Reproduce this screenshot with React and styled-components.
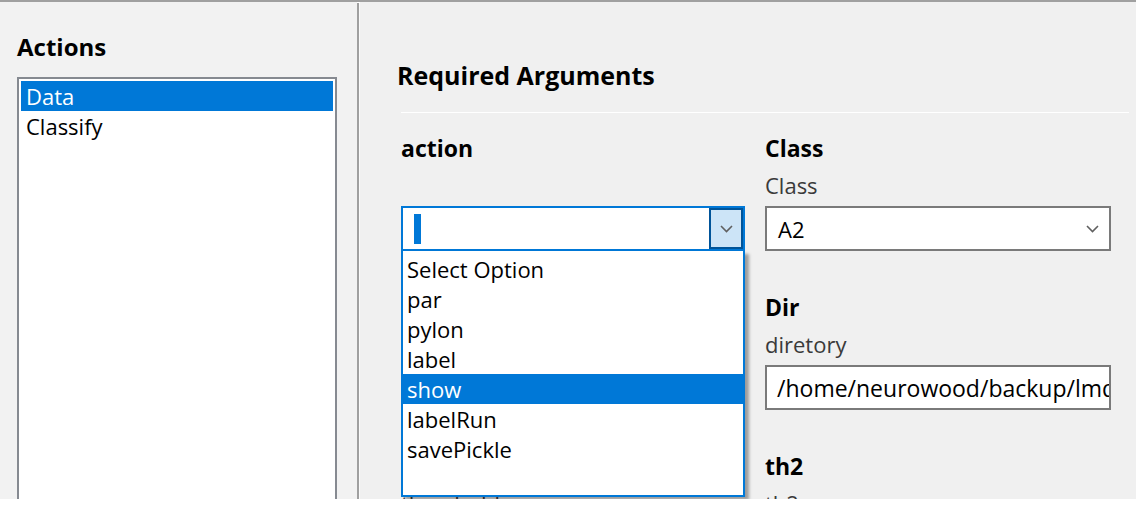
import React from 'react';
import styled, {createGlobalStyle} from 'styled-components';

const GlobalStyle = createGlobalStyle`
html, body {
    margin: 0;
    padding: 0;
    background: white;
}

body {
    font-family: 'Open Sans', 'Noto Sans', sans-serif;
    color: #000;
}
`

const Window = styled.div`
width: 1136px;
height: 499px;
display: flex;
border-top: 2px solid #a0a0a0;
box-sizing: border-box;
overflow: hidden;
`

const LeftPane = styled.div`
width: 357px;
flex-shrink: 0;
padding: 29px 0 0 17px;
box-sizing: border-box;
background: #f2f2f2;
display: flex;
flex-direction: column;
`

const PaneTitle = styled.h2`
margin: 0 0 14px;
font-size: 24px;
line-height: 32px;
font-weight: 700;
`

const ListBox = styled.ul`
width: 320px;
height: 460px;
flex-shrink: 0;
margin: 0;
padding: 2px;
list-style: none;
box-sizing: border-box;
background: white;
border: 2px solid #868a91;
`

const ListItem = styled.li`
height: 30px;
padding-left: 5px;
font-size: 22px;
line-height: 30px;
color: ${props => props.selected ? 'white' : '#000'};
background: ${props => props.selected ? '#0078d7' : 'transparent'};
`

const Divider = styled.div`
width: 2px;
margin-top: 1px;
flex-shrink: 0;
background: #a0a0a0;
border-right: 1px solid #fafafa;
`

const RightPane = styled.div`
flex: 1;
padding: 57px 7px 0 37px;
background: #f0f0f0;
display: flex;
flex-direction: column;
`

const SectionTitle = styled.h2`
margin: 0;
font-size: 25px;
line-height: 32px;
font-weight: 700;
`

const Rule = styled.div`
height: 2px;
margin: 21px 0 0 4px;
background: #a0a0a0;
border-bottom: 1px solid white;
`

const Columns = styled.div`
display: grid;
grid-template-columns: 344px 346px;
column-gap: 20px;
padding: 20px 0 0 4px;
`

const Column = styled.div`
position: relative;
display: flex;
flex-direction: column;
gap: 41px;
`

const Field = styled.div`
display: flex;
flex-direction: column;
`

const FieldTitle = styled.div`
height: 30px;
font-size: 23px;
line-height: 30px;
font-weight: 700;
`

const FieldHint = styled.div`
height: 36px;
margin-top: 7px;
font-size: 22px;
line-height: 30px;
color: #3a3a3a;
`

const Combo = styled.div`
height: 45px;
display: flex;
align-items: center;
box-sizing: border-box;
background: white;
border: 2px solid ${props => props.focused ? '#0078d7' : '#7a7a7a'};
`

const ComboText = styled.div`
flex: 1;
padding-left: 11px;
font-size: 22px;
`

const Caret = styled.span`
display: block;
width: 7px;
height: 30px;
background: #0078d7;
`

const ComboButton = styled.div`
width: 34px;
align-self: stretch;
display: flex;
align-items: center;
justify-content: center;
box-sizing: border-box;
background: ${props => props.open ? '#cce4f7' : 'transparent'};
border: 2px solid ${props => props.open ? '#005499' : 'transparent'};
`

const TextBox = styled.div`
height: 45px;
padding-left: 10px;
display: flex;
align-items: center;
box-sizing: border-box;
overflow: hidden;
white-space: nowrap;
background: white;
border: 2px solid #7a7a7a;
font-size: 23px;
`

const DropList = styled.ul`
position: absolute;
top: 118px;
left: 0;
width: 344px;
height: 246px;
margin: 0;
padding: 3px 0 0;
list-style: none;
box-sizing: border-box;
background: white;
border: 2px solid #0078d7;
border-top: none;
box-shadow: 4px 3px 3px rgba(0, 0, 0, 0.35);
`

const DropItem = styled.li`
height: 30px;
padding-left: 4px;
font-size: 22px;
line-height: 30px;
color: ${props => props.selected ? 'white' : '#000'};
background: ${props => props.selected ? '#0078d7' : 'transparent'};
`

const Chevron = () => (
    <svg width='13' height='8' viewBox='0 0 13 8'>
        <polyline points='1,1 6.5,6.5 12,1' fill='none' stroke='#606060' strokeWidth='1.6'/>
    </svg>
);

const actions = ['Data', 'Classify'];
const options = ['Select Option', 'par', 'pylon', 'label', 'show', 'labelRun', 'savePickle'];

const App = () => {
    return (
        <Window>
            <GlobalStyle/>
            <LeftPane>
                <PaneTitle>Actions</PaneTitle>
                <ListBox>
                    {actions.map((a, i) => (
                        <ListItem key={a} selected={i === 0}>{a}</ListItem>
                    ))}
                </ListBox>
            </LeftPane>
            <Divider/>
            <RightPane>
                <SectionTitle>Required Arguments</SectionTitle>
                <Rule/>
                <Columns>
                    <Column>
                        <Field>
                            <FieldTitle>action</FieldTitle>
                            <FieldHint></FieldHint>
                            <Combo focused>
                                <ComboText><Caret/></ComboText>
                                <ComboButton open><Chevron/></ComboButton>
                            </Combo>
                        </Field>
                        <Field>
                            <FieldTitle>Name</FieldTitle>
                            <FieldHint>name</FieldHint>
                            <TextBox></TextBox>
                        </Field>
                        <Field>
                            <FieldTitle>th1</FieldTitle>
                            <FieldHint>threshold</FieldHint>
                        </Field>
                        <DropList>
                            {options.map(o => (
                                <DropItem key={o} selected={o === 'show'}>{o}</DropItem>
                            ))}
                        </DropList>
                    </Column>
                    <Column>
                        <Field>
                            <FieldTitle>Class</FieldTitle>
                            <FieldHint>Class</FieldHint>
                            <Combo>
                                <ComboText>A2</ComboText>
                                <ComboButton><Chevron/></ComboButton>
                            </Combo>
                        </Field>
                        <Field>
                            <FieldTitle>Dir</FieldTitle>
                            <FieldHint>diretory</FieldHint>
                            <TextBox>/home/neurowood/backup/lmdata</TextBox>
                        </Field>
                        <Field>
                            <FieldTitle>th2</FieldTitle>
                            <FieldHint>th2</FieldHint>
                        </Field>
                    </Column>
                </Columns>
            </RightPane>
        </Window>
    );
};

export default App;
